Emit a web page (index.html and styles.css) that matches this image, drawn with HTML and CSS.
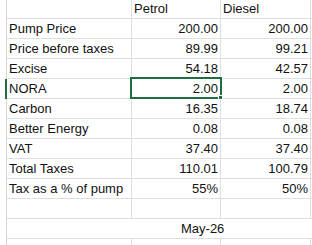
FILE: index.html
```html
<!DOCTYPE html>
<html>
<head>
<meta charset="utf-8">
<link rel="stylesheet" href="styles.css">
</head>
<body>
<div class="sheet">
  <div class="row head"><div class="g"></div><div class="c lab"></div><div class="c hd">Petrol</div><div class="c hd">Diesel</div><div class="f"></div></div>
  <div class="row"><div class="g"></div><div class="c lab">Pump Price</div><div class="c num">200.00</div><div class="c num">200.00</div><div class="f"></div></div>
  <div class="row"><div class="g"></div><div class="c lab">Price before taxes</div><div class="c num">89.99</div><div class="c num">99.21</div><div class="f"></div></div>
  <div class="row"><div class="g"></div><div class="c lab">Excise</div><div class="c num">54.18</div><div class="c num">42.57</div><div class="f"></div></div>
  <div class="row"><div class="g sel-row"></div><div class="c lab">NORA</div><div class="c num active">2.00<span class="selbox"></span><span class="handle"></span></div><div class="c num">2.00</div><div class="f"></div></div>
  <div class="row"><div class="g"></div><div class="c lab">Carbon</div><div class="c num">16.35</div><div class="c num">18.74</div><div class="f"></div></div>
  <div class="row"><div class="g"></div><div class="c lab">Better Energy</div><div class="c num">0.08</div><div class="c num">0.08</div><div class="f"></div></div>
  <div class="row"><div class="g"></div><div class="c lab">VAT</div><div class="c num">37.40</div><div class="c num">37.40</div><div class="f"></div></div>
  <div class="row"><div class="g"></div><div class="c lab">Total Taxes</div><div class="c num">110.01</div><div class="c num">100.79</div><div class="f"></div></div>
  <div class="row"><div class="g"></div><div class="c lab">Tax as a % of pump</div><div class="c num">55%</div><div class="c num">50%</div><div class="f"></div></div>
  <div class="row"><div class="g"></div><div class="c lab"></div><div class="c"></div><div class="c"></div><div class="f"></div></div>
  <div class="row merged"><div class="g"></div><div class="c wide">May-26</div><div class="f"></div></div>
  <div class="row"><div class="g"></div><div class="c lab"></div><div class="c"></div><div class="c"></div><div class="f"></div></div>
</div>
</body>
</html>
```
FILE: styles.css
```css
html, body {
  margin: 0;
  padding: 0;
  background: #ffffff;
}
.sheet {
  width: 312px;
  height: 245px;
  overflow: hidden;
  font-family: "Liberation Sans", Arial, sans-serif;
  font-size: 13px;
  color: #111111;
}
.row {
  display: grid;
  grid-template-columns: 7px 125px 89px 90px 1fr;
  height: 20px;
  line-height: 19px;
}
.row.head {
  height: 19px;
  line-height: 18px;
}
.g {
  box-sizing: border-box;
  border-right: 1px solid #d6d6d6;
}
.g.sel-row {
  border-right: 2px solid #1f6e43;
}
.c {
  box-sizing: border-box;
  border-right: 1px solid #dedede;
  border-bottom: 1px solid #dedede;
  white-space: nowrap;
  overflow: visible;
}
.f {
  border-bottom: 1px solid #dedede;
}
.lab {
  padding-left: 2px;
}
.hd {
  padding-left: 2px;
}
.num {
  text-align: right;
  padding-right: 2px;
}
.active {
  position: relative;
}
.selbox {
  position: absolute;
  left: -2px;
  top: -2px;
  width: 92px;
  height: 22px;
  box-sizing: border-box;
  border: 2px solid #1f6e43;
}
.handle {
  position: absolute;
  left: 86px;
  top: 16px;
  width: 5px;
  height: 5px;
  background: #1f6e43;
  box-sizing: border-box;
  border: 1px solid #ffffff;
}
.row.merged {
  grid-template-columns: 7px 304px 1fr;
}
.wide {
  border-right: none;
  padding-left: 174px;
}
```
